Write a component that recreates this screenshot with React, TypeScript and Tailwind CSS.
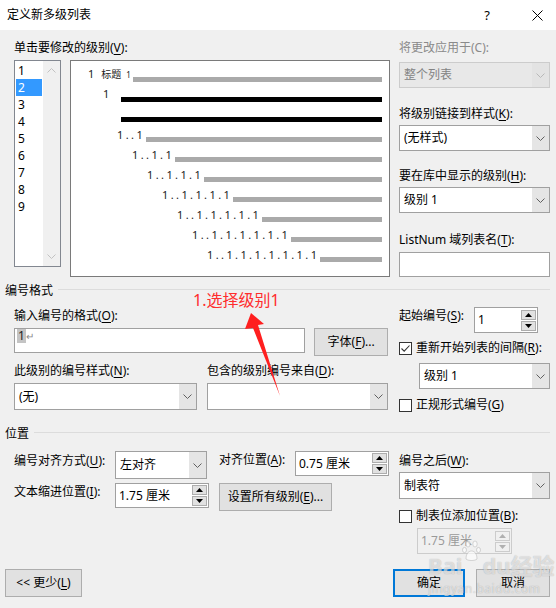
import React from 'react';
import clsx from 'clsx';

function K({ children }: { children: React.ReactNode }) {
  return <span className="underline underline-offset-[2px]">{children}</span>;
}

function Chevron({ up = false, color = '#606060' }: { up?: boolean; color?: string }) {
  return (
    <svg width="9" height="5" viewBox="0 0 9 5" className="block">
      <path d={up ? 'M0.5 4.5 L4.5 0.5 L8.5 4.5' : 'M0.5 0.5 L4.5 4.5 L8.5 0.5'} fill="none" stroke={color} strokeWidth="1" />
    </svg>
  );
}

function Combo({ text, className, disabled }: { text: string; className?: string; disabled?: boolean }) {
  return (
    <div
      className={clsx(
        'flex border',
        disabled ? 'bg-[#e8e8e8] border-[#cccccc] text-[#838383]' : 'bg-white border-[#a0a0a0]',
        className
      )}
    >
      <div className="flex-1 flex items-center pl-[4px]">{text}</div>
      <div className={clsx('w-[17px] flex items-center justify-center', disabled ? 'bg-[#e3e3e3]' : 'bg-[#e5e5e5]')}>
        <Chevron color={disabled ? '#b8b8b8' : '#606060'} />
      </div>
    </div>
  );
}

function SpinBtn({ up, disabled }: { up?: boolean; disabled?: boolean }) {
  const c = disabled ? '#b0b0b0' : '#000000';
  return (
    <div
      className={clsx(
        'w-[15px] h-[10px] border flex items-center justify-center',
        disabled ? 'border-[#cccccc] bg-[#f0f0f0]' : 'border-[#adadad] bg-[#e1e1e1]'
      )}
    >
      <svg width="7" height="4" viewBox="0 0 7 4" className="block">
        <path d={up ? 'M0 4 L3.5 0 L7 4 Z' : 'M0 0 L3.5 4 L7 0 Z'} fill={c} />
      </svg>
    </div>
  );
}

function Spin({ text, className, disabled }: { text: string; className?: string; disabled?: boolean }) {
  return (
    <div
      className={clsx(
        'flex border',
        disabled ? 'border-[#cccccc] bg-[#f0f0f0] text-[#9a9a9a]' : 'bg-white border-[#a0a0a0]',
        className
      )}
    >
      <div className="flex-1 flex items-center pl-[3px]">{text}</div>
      <div className="flex flex-col justify-center gap-[1px] pr-[1px]">
        <SpinBtn up disabled={disabled} />
        <SpinBtn disabled={disabled} />
      </div>
    </div>
  );
}

function Check({ checked }: { checked?: boolean }) {
  return (
    <span className="w-[13px] h-[13px] border border-[#333333] bg-white flex items-center justify-center shrink-0">
      {checked && (
        <svg width="11" height="11" viewBox="0 0 11 11" className="block">
          <path d="M1.5 5.5 L4.2 8.2 L9.5 2.5" fill="none" stroke="#333333" strokeWidth="1.1" />
        </svg>
      )}
    </span>
  );
}

function Btn({ children, className, primary }: { children: React.ReactNode; className?: string; primary?: boolean }) {
  return (
    <button
      type="button"
      className={clsx(
        'flex items-center justify-center bg-[#e1e1e1] leading-[16px]',
        primary ? 'border-2 border-[#0078d7]' : 'border border-[#adadad]',
        className
      )}
    >
      {children}
    </button>
  );
}

function LevelList() {
  const items = ['1', '2', '3', '4', '5', '6', '7', '8', '9'];
  return (
    <div className="w-[47px] h-[207px] bg-white border border-[#828790] flex">
      <div className="flex-1 flex flex-col pt-[1px] px-[1px]">
        {items.map(n => (
          <div key={n} className={clsx('h-[17px] leading-[17px] pl-[2px]', n === '2' && 'bg-[#3399ff] text-white')}>
            {n}
          </div>
        ))}
      </div>
      <div className="w-[17px] bg-[#f0f0f0] flex flex-col justify-between items-center py-[7px]">
        <Chevron up color="#c2c2c2" />
        <Chevron color="#c2c2c2" />
      </div>
    </div>
  );
}

const deepRows = [
  { pad: 'pl-[46px]', w: 'w-[29px]', t: '1..1' },
  { pad: 'pl-[61px]', w: 'w-[43px]', t: '1..1.1' },
  { pad: 'pl-[76px]', w: 'w-[57px]', t: '1..1.1.1' },
  { pad: 'pl-[91px]', w: 'w-[71px]', t: '1..1.1.1.1' },
  { pad: 'pl-[106px]', w: 'w-[85px]', t: '1..1.1.1.1.1' },
  { pad: 'pl-[121px]', w: 'w-[99px]', t: '1..1.1.1.1.1.1' },
  { pad: 'pl-[136px]', w: 'w-[113px]', t: '1..1.1.1.1.1.1.1' },
];

function Preview() {
  return (
    <div className="ml-[9px] w-[320px] h-[217px] bg-white border border-[#7a7a7a] flex flex-col pt-[2px] pr-[7px] text-[11px] text-[#1c1c1c]">
      {/* level 1 */}
      <div className="h-[20px] flex items-end pl-[17px]">
        <span className="w-[45px] flex items-baseline leading-[14px] mb-[1px]">
          <span>1</span>
          <span className="ml-[7px] text-[10px]">标题</span>
          <span className="ml-[5px] text-[8px]">1</span>
        </span>
        <div className="flex-1 h-[5px] mb-[1px] bg-[#aaaaaa]" />
      </div>
      {/* level 2, selected */}
      <div className="h-[20px] flex items-end pl-[32px]">
        <span className="w-[18px] leading-[14px] mb-[2px]">1</span>
        <div className="flex-1 h-[5px] mb-[1px] bg-black" />
      </div>
      <div className="h-[20px] flex items-end pl-[50px]">
        <div className="flex-1 h-[5px] mb-[1px] bg-black" />
      </div>
      {deepRows.map(r => (
        <div key={r.t} className={clsx('h-[20px] flex items-end', r.pad)}>
          <span className={clsx('leading-[14px] mb-[1px] tracking-[2.4px] whitespace-nowrap', r.w)}>{r.t}</span>
          <div className="flex-1 h-[5px] mb-[1px] bg-[#aaaaaa]" />
        </div>
      ))}
    </div>
  );
}

function GroupTitle({ title, className }: { title: string; className?: string }) {
  return (
    <div className={clsx('flex items-start h-[16px] pl-[5px] pr-[6px]', className)}>
      <span>{title}</span>
      <div className="flex-1 h-px bg-[#dcdcdc] ml-[5px] mt-[6px]" />
    </div>
  );
}

export default function App() {
  return (
    <div className="relative w-[556px] h-[608px] bg-[#f0f0f0] text-[12px] leading-[16px] text-black font-['Noto_Sans','Noto_Sans_CJK_SC',sans-serif] overflow-hidden">
      {/* title bar */}
      <div className="h-[30px] bg-white flex items-center pl-[7px] pr-[9px]">
        <span className="flex-1">定义新多级列表</span>
        <span className="w-[20px] text-center text-[13px]">?</span>
        <span className="w-[20px] ml-[30px] flex items-center justify-center">
          <svg width="11" height="11" viewBox="0 0 11 11" className="block">
            <path d="M0.5 0.5 L10.5 10.5 M10.5 0.5 L0.5 10.5" stroke="#000000" strokeWidth="1" />
          </svg>
        </span>
      </div>

      {/* levels + right options */}
      <div className="flex pt-[10px] pl-[14px]">
        <div className="w-[376px] flex flex-col">
          <div className="h-[16px]">单击要修改的级别(<K>V</K>):</div>
          <div className="flex mt-[4px]">
            <LevelList />
            <Preview />
          </div>
        </div>
        <div className="w-[151px] ml-[9px] flex flex-col">
          <div className="h-[16px] text-[#8a8a8a]">将更改应用于(C):</div>
          <Combo disabled text="整个列表" className="mt-[6px] h-[26px]" />
          <div className="h-[16px] mt-[18px]">将级别链接到样式(<K>K</K>):</div>
          <Combo text="(无样式)" className="mt-[3px] h-[26px]" />
          <div className="h-[16px] mt-[17px]">要在库中显示的级别(<K>H</K>):</div>
          <Combo text="级别 1" className="mt-[3px] h-[26px]" />
          <div className="h-[16px] mt-[19px]">ListNum 域列表名(<K>T</K>):</div>
          <div className="mt-[4px] h-[25px] bg-white border border-[#a0a0a0]" />
        </div>
      </div>

      {/* 编号格式 */}
      <GroupTitle title="编号格式" className="mt-[6px]" />
      <div className="flex pl-[14px]">
        <div className="w-[374px] flex flex-col">
          <div className="h-[16px] mt-[9px]">输入编号的格式(<K>O</K>):</div>
          <div className="flex mt-[4px] items-start">
            <div className="w-[292px] h-[25px] bg-white border border-[#a0a0a0] flex items-start pl-[2px]">
              <span className="bg-[#c4c4c4] text-[#222222] leading-[14px] px-[1px]">1</span>
              <span className="text-[#8a8a8a] text-[10px] leading-[14px]">↵</span>
            </div>
            <Btn className="ml-[9px] w-[74px] h-[28px]">
              字体(<K>F</K>)...
            </Btn>
          </div>
          <div className="flex mt-[7px]">
            <div className="w-[193px] h-[16px]">此级别的编号样式(<K>N</K>):</div>
            <div className="h-[16px]">包含的级别编号来自(<K>D</K>):</div>
          </div>
          <div className="flex mt-[4px]">
            <Combo text="(无)" className="w-[183px] h-[27px]" />
            <Combo text="" className="ml-[10px] w-[181px] h-[27px]" />
          </div>
        </div>
        <div className="ml-[11px] w-[151px] flex flex-col">
          <div className="flex mt-[8px] items-start">
            <div className="w-[75px] mt-[1px]">起始编号(<K>S</K>):</div>
            <Spin text="1" className="w-[64px] h-[26px]" />
          </div>
          <div className="flex items-center mt-[7px] h-[16px]">
            <Check checked />
            <span className="ml-[4px]">重新开始列表的间隔(<K>R</K>):</span>
          </div>
          <Combo text="级别 1" className="ml-[20px] w-[131px] h-[26px] mt-[7px]" />
          <div className="flex items-center mt-[8px] h-[16px]">
            <Check />
            <span className="ml-[4px]">正规形式编号(<K>G</K>)</span>
          </div>
        </div>
      </div>

      {/* 位置 */}
      <GroupTitle title="位置" className="mt-[13px]" />
      <div className="flex pl-[14px]">
        <div className="w-[375px] flex flex-col">
          <div className="flex mt-[9px] items-start">
            <div className="w-[101px] mt-[2px]">编号对齐方式(<K>U</K>):</div>
            <Combo text="左对齐" className="w-[92px] h-[28px]" />
            <div className="ml-[12px] w-[76px] mt-[1px]">对齐位置(<K>A</K>):</div>
            <Spin text="0.75 厘米" className="w-[94px] h-[25px]" />
          </div>
          <div className="flex mt-[4px] items-start">
            <div className="w-[101px] mt-[1px]">文本缩进位置(<K>I</K>):</div>
            <Spin text="1.75 厘米" className="w-[94px] h-[25px]" />
            <Btn className="ml-[10px] w-[113px] h-[28px]">
              设置所有级别(<K>E</K>)...
            </Btn>
          </div>
        </div>
        <div className="ml-[10px] w-[151px] flex flex-col">
          <div className="h-[16px] mt-[11px]">编号之后(<K>W</K>):</div>
          <Combo text="制表符" className="mt-[3px] h-[27px]" />
          <div className="flex items-center mt-[9px] h-[16px]">
            <Check />
            <span className="ml-[4px]">制表位添加位置(<K>B</K>):</span>
          </div>
          <Spin disabled text="1.75 厘米" className="ml-[18px] w-[95px] h-[26px] mt-[4px]" />
        </div>
      </div>

      {/* bottom buttons */}
      <div className="flex mt-[15px] pl-[5px] pr-[6px]">
        <Btn className="w-[77px] h-[28px]">
          &lt;&lt; 更少(<K>L</K>)
        </Btn>
        <Btn primary className="ml-auto w-[72px] h-[28px]">
          确定
        </Btn>
        <Btn className="ml-[11px] w-[74px] h-[28px]">取消</Btn>
      </div>

      {/* annotation */}
      <div className="absolute left-[193px] top-[289px] text-[16px] leading-[22px] text-[#ff2d2d] whitespace-nowrap">
        1.选择级别1
      </div>
      <svg className="absolute left-0 top-0 pointer-events-none" width="556" height="608" viewBox="0 0 556 608">
        <polygon points="251,313 264,324 258,325 280,396 253,328 245,329" fill="#ff1f1f" />
      </svg>

      {/* watermark */}
      <div className="absolute left-[428px] top-[540px] pointer-events-none flex flex-col items-start text-white/60 [text-shadow:0_0_1px_rgba(0,0,0,0.3)]">
        <div className="flex items-end text-[22px] leading-[26px] font-bold">
          <span>Bai</span>
          <svg width="20" height="36" viewBox="0 0 20 36" className="block mb-[2px]">
            <g fill="rgba(255,255,255,0.6)" stroke="rgba(120,120,120,0.35)" strokeWidth="0.8">
              <ellipse cx="6" cy="4" rx="2.2" ry="3" />
              <ellipse cx="13" cy="4" rx="2.2" ry="3" />
              <ellipse cx="2.5" cy="10" rx="2" ry="2.6" />
              <ellipse cx="16.5" cy="10" rx="2" ry="2.6" />
              <path d="M4 19 C4 13 7 11 9.5 11 C12 11 15 13 15 19 C13 21 6 21 4 19 Z" />
            </g>
          </svg>
          <span>du经验</span>
        </div>
        <div className="text-[12px] leading-[14px] mt-[4px] tracking-[0.5px]">jingyan.baidu.com</div>
      </div>
    </div>
  );
}
